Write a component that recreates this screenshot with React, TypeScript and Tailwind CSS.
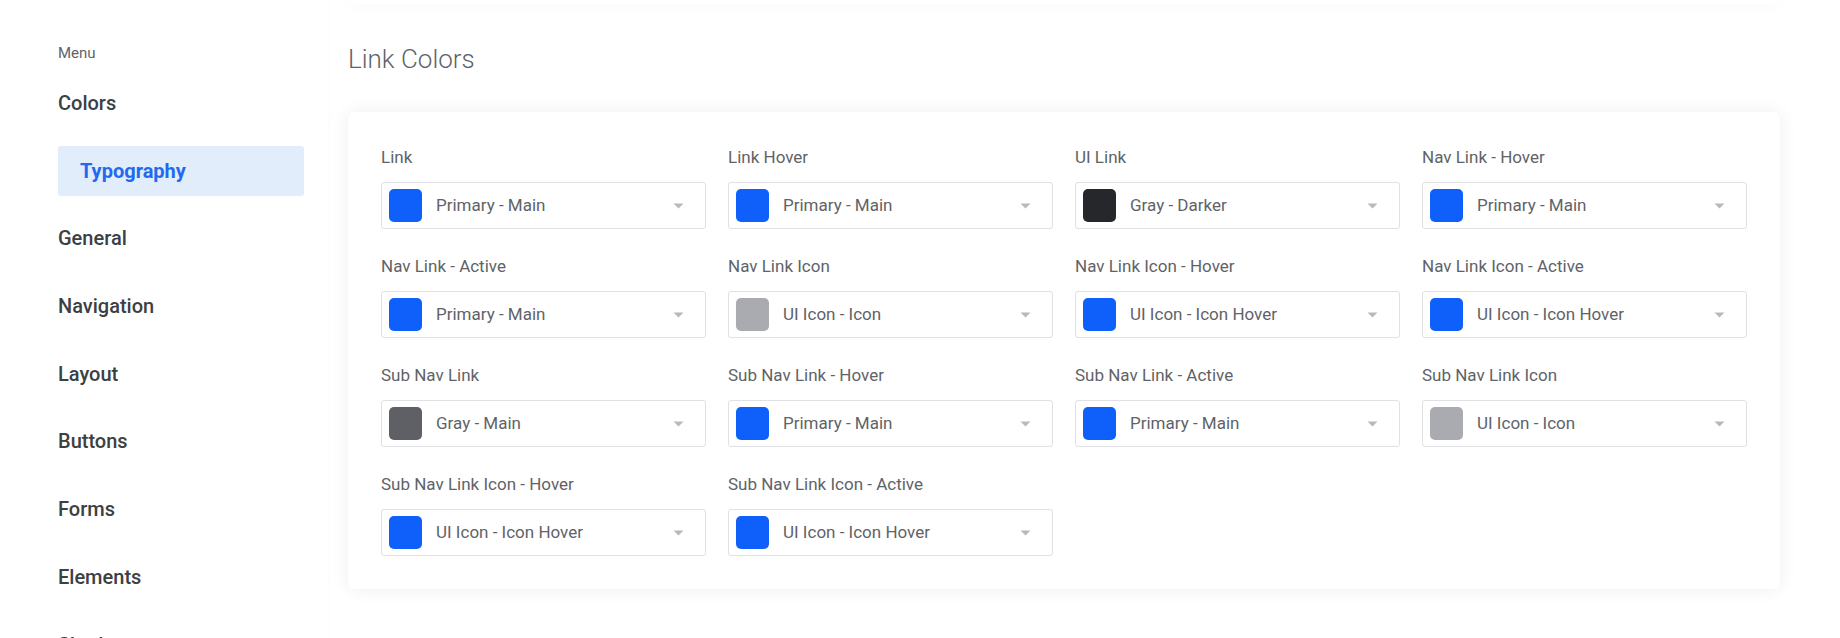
import React from "react";

type Field = { label: string; value: string; color: string };

const BLUE = "#0f5ffb";
const ICON_GRAY = "#a9abb1";
const DARK = "#26272b";
const GRAY_MAIN = "#5e6066";

const fields: Field[] = [
  { label: "Link", value: "Primary - Main", color: BLUE },
  { label: "Link Hover", value: "Primary - Main", color: BLUE },
  { label: "UI Link", value: "Gray - Darker", color: DARK },
  { label: "Nav Link - Hover", value: "Primary - Main", color: BLUE },
  { label: "Nav Link - Active", value: "Primary - Main", color: BLUE },
  { label: "Nav Link Icon", value: "UI Icon - Icon", color: ICON_GRAY },
  { label: "Nav Link Icon - Hover", value: "UI Icon - Icon Hover", color: BLUE },
  { label: "Nav Link Icon - Active", value: "UI Icon - Icon Hover", color: BLUE },
  { label: "Sub Nav Link", value: "Gray - Main", color: GRAY_MAIN },
  { label: "Sub Nav Link - Hover", value: "Primary - Main", color: BLUE },
  { label: "Sub Nav Link - Active", value: "Primary - Main", color: BLUE },
  { label: "Sub Nav Link Icon", value: "UI Icon - Icon", color: ICON_GRAY },
  { label: "Sub Nav Link Icon - Hover", value: "UI Icon - Icon Hover", color: BLUE },
  { label: "Sub Nav Link Icon - Active", value: "UI Icon - Icon Hover", color: BLUE },
];

const menu = ["Colors", "Typography", "General", "Navigation", "Layout", "Buttons", "Forms", "Elements", "Shadows"];

function Caret() {
  return (
    <svg width="11" height="6" viewBox="0 0 11 6" className="shrink-0">
      <path d="M0.5 0.5 H10.5 L5.5 5.5 Z" fill="#b6b9bf" />
    </svg>
  );
}

function ColorSelect({ f }: { f: Field }) {
  return (
    <div className="flex flex-col">
      <div className="text-[17px] leading-[24px] text-[#5f6368] mb-[13px] whitespace-nowrap">{f.label}</div>
      <div className="h-[47px] border border-[#dfe1e5] rounded-[3px] bg-white flex items-center pl-[7px] pr-[21px]">
        <div className="w-[33px] h-[33px] rounded-[5px] shrink-0" style={{ backgroundColor: f.color }} />
        <div className="ml-[14px] flex-1 text-[17px] text-[#5f6368] whitespace-nowrap">{f.value}</div>
        <Caret />
      </div>
    </div>
  );
}

export default function App() {
  return (
    <div
      className="flex w-[1840px] min-h-[638px] bg-white"
      style={{ fontFamily: "Roboto, 'Noto Sans', 'Liberation Sans', sans-serif" }}
    >
      <aside className="w-[330px] shrink-0 pl-[58px] pt-[43px] border-r border-[#fbfbfb]">
        <div className="text-[15px] leading-[20px] text-[#5f6368]">Menu</div>
        <nav className="mt-[15px] flex flex-col gap-[17.7px] w-[246px]">
          {menu.map((m) =>
            m === "Typography" ? (
              <div
                key={m}
                className="h-[50px] flex items-center pl-[22px] rounded-[3px] bg-[#e2edfc] text-[20px] font-bold text-[#2369f0]"
              >
                {m}
              </div>
            ) : (
              <div key={m} className="h-[50px] flex items-center text-[20px] font-medium text-[#3c4043]">
                {m}
              </div>
            )
          )}
        </nav>
      </aside>
      <main className="flex-1 pl-[18px] pr-[60px]">
        <div className="h-[4px] bg-white rounded-b-[6px] shadow-[0_0_16px_rgba(0,0,0,0.07)]" />
        <h2 className="mt-[39px] text-[26px] leading-[32px] font-light text-[#5f6368]">Link Colors</h2>
        <section className="mt-[37px] bg-white rounded-[6px] shadow-[0_0_18px_rgba(0,0,0,0.07)] p-[33px]">
          <div className="grid grid-cols-4 gap-x-[22px] gap-y-[25px]">
            {fields.map((f) => (
              <ColorSelect key={f.label} f={f} />
            ))}
          </div>
        </section>
      </main>
    </div>
  );
}
